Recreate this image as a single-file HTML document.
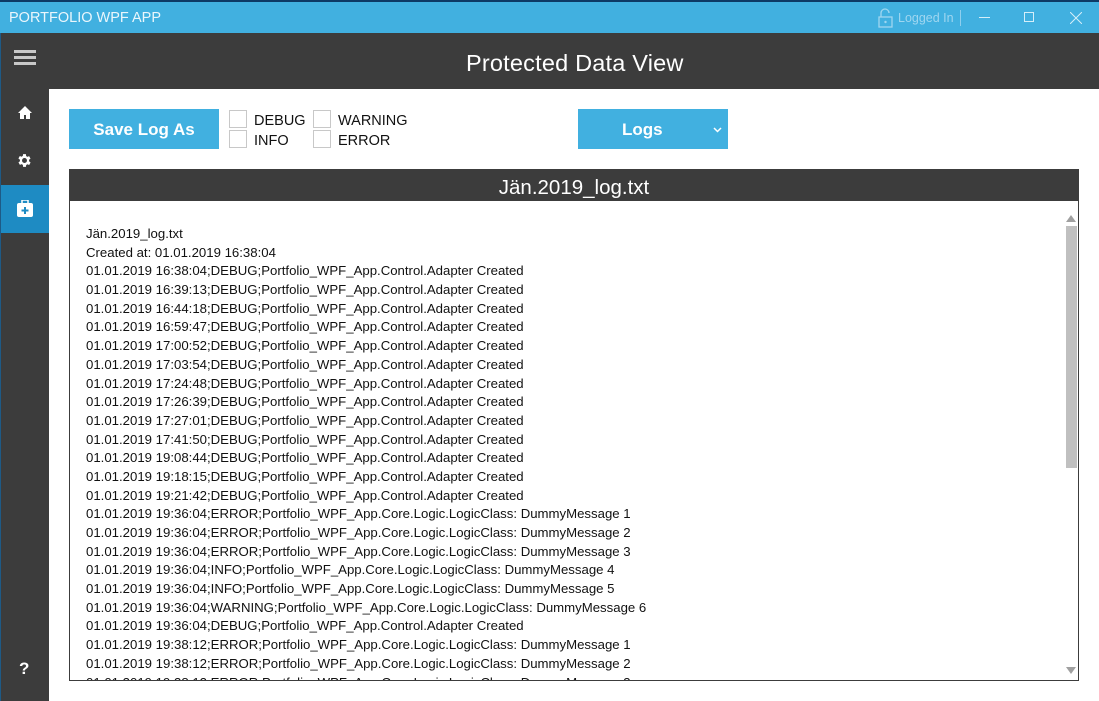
<!DOCTYPE html><html><head><meta charset="utf-8"><style>
*{margin:0;padding:0;box-sizing:border-box}
body{width:1099px;height:701px;overflow:hidden;background:#fff;font-family:"Liberation Sans",sans-serif;position:relative}
.a{position:absolute}
.cb{position:absolute;width:18px;height:18px;border:1px solid #c8c8c8;background:#fff}
.lbl{position:absolute;font-size:14.5px;color:#111}
#log div{height:18.7px;font-size:13.2px;color:#111;white-space:nowrap;line-height:18.7px}
</style></head><body>
<div class="a" style="left:0;top:0;width:1099px;height:2px;background:#0d3a66"></div>
<div class="a" style="left:0;top:2px;width:1099px;height:31px;background:#41b0e0"></div>
<div class="a" style="left:9px;top:10px;color:#eaf6fc;font-size:14.5px">PORTFOLIO WPF APP</div>
<svg class="a" style="left:877px;top:8px" width="18" height="20" viewBox="0 0 18 20"><path d="M4 9V5a4 4 0 0 1 8 0" fill="none" stroke="#9fd6f0" stroke-width="1.3"/><rect x="2" y="9" width="13" height="10" fill="none" stroke="#9fd6f0" stroke-width="1.3"/><circle cx="8.5" cy="14" r="1.2" fill="#9fd6f0"/></svg>
<div class="a" style="left:898px;top:11px;color:#9fd6f0;font-size:12.5px">Logged In</div>
<div class="a" style="left:960px;top:10px;width:1px;height:16px;background:#8fcfee"></div>
<div class="a" style="left:979px;top:17px;width:11px;height:1px;background:#d5eef9"></div>
<div class="a" style="left:1024px;top:12px;width:10px;height:10px;border:1px solid #d5eef9"></div>
<svg class="a" style="left:1070px;top:12px" width="12" height="12"><path d="M0 0L12 12M12 0L0 12" stroke="#d5eef9" stroke-width="1"/></svg>
<div class="a" style="left:0;top:33px;width:1099px;height:56px;background:#3c3c3c"></div>
<div class="a" style="left:0;top:33px;width:49px;height:668px;background:#3c3c3c"></div>
<div class="a" style="left:0;top:33px;width:1px;height:668px;background:#1e5a86"></div>
<div class="a" style="left:14px;top:50px;width:22px;height:3px;background:#c8c8c8;box-shadow:0 6px 0 #c8c8c8,0 12px 0 #c8c8c8"></div>
<div class="a" style="left:466px;top:50px;color:#fff;font-size:23.5px;letter-spacing:0.2px">Protected Data View</div>
<svg class="a" style="left:17px;top:105px" width="16" height="15" viewBox="0 0 16 15"><path d="M8 1L1 8h2v6h4v-4h2v4h4V8h2z" fill="#fff"/></svg>
<svg class="a" style="left:16px;top:152px" width="17" height="17" viewBox="0 0 24 24"><path fill="#fff" d="M19.4 13a7.5 7.5 0 0 0 0-2l2.1-1.6-2-3.5-2.5 1a7 7 0 0 0-1.7-1L15 3h-4l-.4 2.7a7 7 0 0 0-1.7 1l-2.5-1-2 3.5L6.6 11a7.5 7.5 0 0 0 0 2l-2.1 1.6 2 3.5 2.5-1a7 7 0 0 0 1.7 1L11 21h4l.4-2.7a7 7 0 0 0 1.7-1l2.5 1 2-3.5zM13 15.5a3.5 3.5 0 1 1 0-7 3.5 3.5 0 0 1 0 7z" transform="translate(-1 0)"/></svg>
<div class="a" style="left:1px;top:185px;width:48px;height:48px;background:#1e8bc3"></div>
<svg class="a" style="left:17px;top:200px" width="16" height="17" viewBox="0 0 16 17"><rect x="0" y="3" width="16" height="14" rx="2" fill="#fff"/><rect x="5" y="0" width="6" height="4" fill="none" stroke="#fff" stroke-width="1.5"/><path d="M8 7v7M4.5 10.5h7" stroke="#1e8bc3" stroke-width="2"/></svg>
<div class="a" style="left:19px;top:659px;color:#fff;font-size:17px;font-weight:bold">?</div>
<div class="a" style="left:69px;top:109px;width:150px;height:40px;background:#41b0e0;color:#fff;font-weight:bold;font-size:17px;text-align:center;line-height:42px">Save Log As</div>
<div class="cb" style="left:229px;top:110px"></div><div class="lbl" style="left:254px;top:113px">DEBUG</div>
<div class="cb" style="left:229px;top:130px"></div><div class="lbl" style="left:254px;top:133px">INFO</div>
<div class="cb" style="left:313px;top:110px"></div><div class="lbl" style="left:338px;top:113px">WARNING</div>
<div class="cb" style="left:313px;top:130px"></div><div class="lbl" style="left:338px;top:133px">ERROR</div>
<div class="a" style="left:578px;top:109px;width:150px;height:40px;background:#41b0e0;color:#fff;font-weight:bold;font-size:17px;line-height:42px;padding-left:44px">Logs</div>
<svg class="a" style="left:713px;top:127px" width="9" height="6"><path d="M1 1l3.5 3.5L8 1" fill="none" stroke="#fff" stroke-width="1.5"/></svg>
<div class="a" style="left:69px;top:169px;width:1010px;height:512px;border:1px solid #3c3c3c;overflow:hidden">
<div style="height:31px;background:#3c3c3c;color:#fff;font-size:20.5px;text-align:center;line-height:35px">Jän.2019_log.txt</div>
<div class="a" style="left:996px;top:45px;width:0;height:0;border-left:5px solid transparent;border-right:5px solid transparent;border-bottom:7px solid #a0a0a0"></div>
<div class="a" style="left:996px;top:56px;width:11px;height:242px;background:#c0c0c0"></div>
<div class="a" style="left:996px;top:497px;width:0;height:0;border-left:5px solid transparent;border-right:5px solid transparent;border-top:7px solid #a0a0a0"></div>
<div id="log" class="a" style="left:16px;top:55px">
<div>Jän.2019_log.txt</div>
<div>Created at: 01.01.2019 16:38:04</div>
<div>01.01.2019 16:38:04;DEBUG;Portfolio_WPF_App.Control.Adapter Created</div>
<div>01.01.2019 16:39:13;DEBUG;Portfolio_WPF_App.Control.Adapter Created</div>
<div>01.01.2019 16:44:18;DEBUG;Portfolio_WPF_App.Control.Adapter Created</div>
<div>01.01.2019 16:59:47;DEBUG;Portfolio_WPF_App.Control.Adapter Created</div>
<div>01.01.2019 17:00:52;DEBUG;Portfolio_WPF_App.Control.Adapter Created</div>
<div>01.01.2019 17:03:54;DEBUG;Portfolio_WPF_App.Control.Adapter Created</div>
<div>01.01.2019 17:24:48;DEBUG;Portfolio_WPF_App.Control.Adapter Created</div>
<div>01.01.2019 17:26:39;DEBUG;Portfolio_WPF_App.Control.Adapter Created</div>
<div>01.01.2019 17:27:01;DEBUG;Portfolio_WPF_App.Control.Adapter Created</div>
<div>01.01.2019 17:41:50;DEBUG;Portfolio_WPF_App.Control.Adapter Created</div>
<div>01.01.2019 19:08:44;DEBUG;Portfolio_WPF_App.Control.Adapter Created</div>
<div>01.01.2019 19:18:15;DEBUG;Portfolio_WPF_App.Control.Adapter Created</div>
<div>01.01.2019 19:21:42;DEBUG;Portfolio_WPF_App.Control.Adapter Created</div>
<div>01.01.2019 19:36:04;ERROR;Portfolio_WPF_App.Core.Logic.LogicClass: DummyMessage 1</div>
<div>01.01.2019 19:36:04;ERROR;Portfolio_WPF_App.Core.Logic.LogicClass: DummyMessage 2</div>
<div>01.01.2019 19:36:04;ERROR;Portfolio_WPF_App.Core.Logic.LogicClass: DummyMessage 3</div>
<div>01.01.2019 19:36:04;INFO;Portfolio_WPF_App.Core.Logic.LogicClass: DummyMessage 4</div>
<div>01.01.2019 19:36:04;INFO;Portfolio_WPF_App.Core.Logic.LogicClass: DummyMessage 5</div>
<div>01.01.2019 19:36:04;WARNING;Portfolio_WPF_App.Core.Logic.LogicClass: DummyMessage 6</div>
<div>01.01.2019 19:36:04;DEBUG;Portfolio_WPF_App.Control.Adapter Created</div>
<div>01.01.2019 19:38:12;ERROR;Portfolio_WPF_App.Core.Logic.LogicClass: DummyMessage 1</div>
<div>01.01.2019 19:38:12;ERROR;Portfolio_WPF_App.Core.Logic.LogicClass: DummyMessage 2</div>
<div>01.01.2019 19:38:12;ERROR;Portfolio_WPF_App.Core.Logic.LogicClass: DummyMessage 3</div>
</div></div>
</body></html>
